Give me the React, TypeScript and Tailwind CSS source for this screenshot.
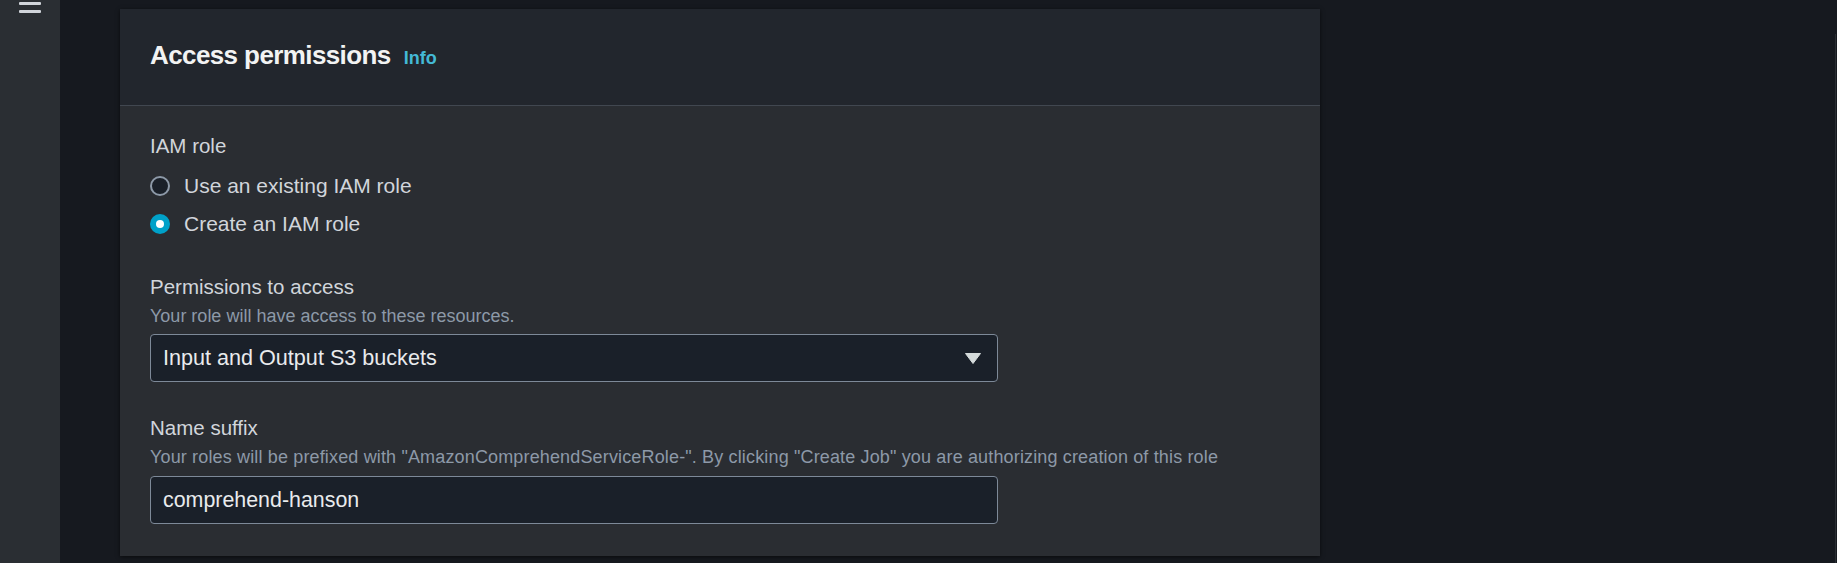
import React, { useState } from 'react';

const font = { fontFamily: '"Liberation Sans", Arial, sans-serif' };

const Radio: React.FC<{ checked: boolean; label: string; onClick: () => void }> = ({ checked, label, onClick }) => (
  <button type="button" onClick={onClick} className="flex items-center gap-[14px] h-[30px] text-left">
    {checked ? (
      <span className="w-[20px] h-[20px] rounded-full bg-[#00a1c9] flex items-center justify-center shrink-0">
        <span className="w-[8px] h-[8px] rounded-full bg-white" />
      </span>
    ) : (
      <span className="w-[20px] h-[20px] rounded-full border-2 border-[#8d99a8] bg-[#1a2029] shrink-0" />
    )}
    <span className="text-[21px] leading-[30px] text-[#d1d5db]">{label}</span>
  </button>
);

export default function App() {
  const [role, setRole] = useState<'existing' | 'create'>('create');
  const [suffix, setSuffix] = useState('comprehend-hanson');

  return (
    <div className="h-[563px] w-full flex bg-[#16191f] overflow-hidden" style={font}>
      {/* Sidebar rail */}
      <aside className="w-[60px] shrink-0 bg-[#2a2e33] flex flex-col items-center pt-[2px] gap-[5px]">
        <span className="block w-[22px] h-[3px] rounded-[1px] bg-[#d1d5db]" />
        <span className="block w-[22px] h-[3px] rounded-[1px] bg-[#d1d5db]" />
      </aside>

      <main className="flex-1 pl-[60px] pt-[9px]">
        <section className="w-[1200px] bg-[#2a2d32] shadow-[0_1px_4px_rgba(0,0,0,0.6)]">
          {/* Header */}
          <div className="h-[97px] bg-[#22262d] border-b border-[#414750] px-[30px] pt-[30px]">
            <div className="flex items-baseline gap-[13px]">
              <h2 className="text-[26px] leading-[32px] font-bold tracking-[-0.6px] text-[#f2f3f3]">Access permissions</h2>
              <a className="text-[18px] font-bold text-[#44b9d6] cursor-pointer">Info</a>
            </div>
          </div>

          {/* Body */}
          <div className="px-[30px] pt-[25px] pb-[32px]">
            <div className="text-[20.5px] leading-[30px] text-[#d1d5db]">IAM role</div>
            <div className="mt-[10px] flex flex-col gap-[8px]">
              <Radio checked={role === 'existing'} label="Use an existing IAM role" onClick={() => setRole('existing')} />
              <Radio checked={role === 'create'} label="Create an IAM role" onClick={() => setRole('create')} />
            </div>

            <div className="mt-[33px] text-[20.5px] leading-[30px] text-[#d1d5db]">Permissions to access</div>
            <div className="mt-[2px] text-[18px] leading-[24px] text-[#8d99a8]">Your role will have access to these resources.</div>
            <div className="mt-[6px] w-[848px] h-[48px] rounded-[4px] border border-[#7d8998] bg-[#1a2029] flex items-center justify-between pl-[12px] pr-[16px]">
              <span className="text-[21.6px] text-[#e9ebed]">Input and Output S3 buckets</span>
              <svg width="16" height="11" viewBox="0 0 16 11" className="shrink-0">
                <path d="M0.5 0.5 H15.5 L8 10.5 Z" fill="#d5dbdb" stroke="#d5dbdb" strokeLinejoin="round" />
              </svg>
            </div>

            <div className="mt-[31px] text-[20.5px] leading-[30px] text-[#d1d5db]">Name suffix</div>
            <div className="mt-[2px] text-[18px] leading-[24px] tracking-[0.15px] text-[#8d99a8]">
              Your roles will be prefixed with "AmazonComprehendServiceRole-". By clicking "Create Job" you are authorizing creation of this role
            </div>
            <input
              value={suffix}
              onChange={(e) => setSuffix(e.target.value)}
              className="mt-[7px] block w-[848px] h-[48px] rounded-[4px] border border-[#7d8998] bg-[#1a2029] px-[12px] text-[21.4px] text-[#e9ebed] outline-none"
              style={font}
            />
          </div>
        </section>
      </main>

      <div className="w-[2px] shrink-0 mt-[34px] border-l border-[#2a2e33]" />
    </div>
  );
}
